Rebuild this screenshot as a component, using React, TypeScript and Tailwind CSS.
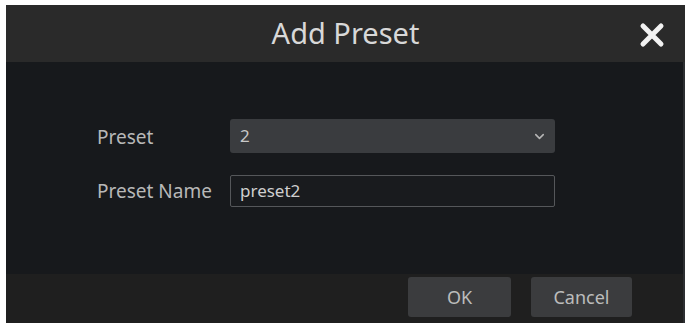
import { ChevronDown } from 'lucide-react'

export default function App() {
  return (
    <div className="w-[685px] h-[323px] bg-white pt-[5px] pl-[6px] overflow-hidden" style={{ fontFamily: '"Noto Sans", "Open Sans", sans-serif' }}>
      <div className="flex flex-col h-full w-full">
        <div className="h-[57px] bg-[#2a2a2a] flex items-center relative shrink-0">
          <span className="flex-1 text-center text-[29px] text-[#d8d8d8] pb-[1px]">Add Preset</span>
          <button className="absolute right-[20px] top-[17px] text-white">
            <svg width="26" height="26" viewBox="0 0 26 26">
              <path d="M4 4 L22 22 M22 4 L4 22" stroke="#f2f2f2" strokeWidth="5" strokeLinecap="round" />
            </svg>
          </button>
        </div>
        <div className="h-[212px] bg-[#17191c] flex flex-col pl-[91px] pt-[57px] gap-[22px] shrink-0 border-r-2 border-[#2c2e31]">
          <div className="flex items-center h-[34px]">
            <span className="w-[133px] text-[19px] text-[#b8b8b8] pt-[3px]">Preset</span>
            <div className="w-[325px] h-[34px] rounded-[3px] bg-[#3a3c3f] flex items-center justify-between pl-[10px] pr-[8px]">
              <span className="text-[17px] text-[#c8c8c8]">2</span>
              <ChevronDown size={15} strokeWidth={2.5} className="text-[#b5b5b5]" />
            </div>
          </div>
          <div className="flex items-center h-[32px]">
            <span className="w-[133px] text-[19px] text-[#b8b8b8]">Preset Name</span>
            <div className="w-[325px] h-[32px] rounded-[2px] border border-[#55575a] bg-[#191b1e] flex items-center px-[9px]">
              <span className="text-[17px] text-[#cfcfcf]">preset2</span>
            </div>
          </div>
        </div>
        <div className="flex-1 bg-[#1f1f1f] flex justify-end items-start pt-[3px] pr-[51px] gap-[20px] border-r-2 border-[#2c2e31]">
          <button className="w-[103px] h-[40px] rounded-[3px] bg-[#3b3c3e] text-[18px] text-[#bcbcbc]">OK</button>
          <button className="w-[101px] h-[40px] rounded-[3px] bg-[#3b3c3e] text-[18px] text-[#bcbcbc]">Cancel</button>
        </div>
      </div>
    </div>
  )
}
